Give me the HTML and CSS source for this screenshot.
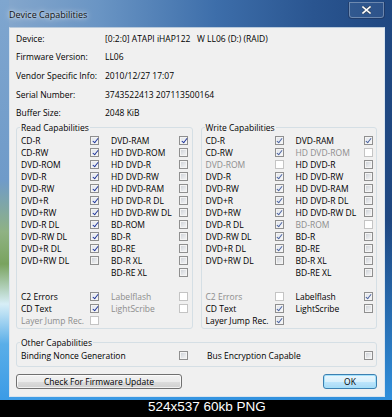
FILE: index.html
```html
<!DOCTYPE html>
<html lang="en">

<head>
  <meta charset="UTF-8">
  <title>Device Capabilities</title>
  <link rel="stylesheet" href="styles.css">
</head>

<body>
  <div class="window">
    <div class="titlebar">
      <span class="title">Device Capabilities</span>
      <span class="close-button">
        <svg width="9" height="8" viewBox="0 0 9 8">
          <path d="M1 1 L8 7 M8 1 L1 7" stroke="#3a4a60" stroke-width="3" stroke-linecap="square" />
          <path d="M1 1 L8 7 M8 1 L1 7" stroke="#ffffff" stroke-width="1.6" stroke-linecap="square" />
        </svg>
      </span>
    </div>

    <div class="client">
      <div class="info">
        <div class="info-row"><span class="info-label">Device:</span><span class="info-value">[0:2:0] ATAPI iHAP122   W LL06 (D:) (RAID)</span></div>
        <div class="info-row"><span class="info-label">Firmware Version:</span><span class="info-value">LL06</span></div>
        <div class="info-row"><span class="info-label">Vendor Specific Info:</span><span class="info-value">2010/12/27 17:07</span></div>
        <div class="info-row"><span class="info-label">Serial Number:</span><span class="info-value">3743522413 207113500164</span></div>
        <div class="info-row"><span class="info-label">Buffer Size:</span><span class="info-value">2048 KiB</span></div>
      </div>

      <div class="caps">
        <fieldset class="group read">
          <legend>Read Capabilities</legend>
          <div class="cap-grid">
            <span>CD-R</span><input type="checkbox" checked><span class="col2">DVD-RAM</span><input type="checkbox" checked>
            <span>CD-RW</span><input type="checkbox" checked><span class="col2">HD DVD-ROM</span><input type="checkbox">
            <span>DVD-ROM</span><input type="checkbox" checked><span class="col2">HD DVD-R</span><input type="checkbox">
            <span>DVD-R</span><input type="checkbox" checked><span class="col2">HD DVD-RW</span><input type="checkbox">
            <span>DVD-RW</span><input type="checkbox" checked><span class="col2">HD DVD-RAM</span><input type="checkbox">
            <span>DVD+R</span><input type="checkbox" checked><span class="col2">HD DVD-R DL</span><input type="checkbox">
            <span>DVD+RW</span><input type="checkbox" checked><span class="col2">HD DVD-RW DL</span><input type="checkbox">
            <span>DVD-R DL</span><input type="checkbox" checked><span class="col2">BD-ROM</span><input type="checkbox">
            <span>DVD-RW DL</span><input type="checkbox" checked><span class="col2">BD-R</span><input type="checkbox">
            <span>DVD+R DL</span><input type="checkbox" checked><span class="col2">BD-RE</span><input type="checkbox">
            <span>DVD+RW DL</span><input type="checkbox"><span class="col2">BD-R XL</span><input type="checkbox">
            <span></span><span></span><span class="col2">BD-RE XL</span><input type="checkbox">
            <div class="spacer"></div>
            <span>C2 Errors</span><input type="checkbox" checked><span class="col2 off">Labelflash</span><input type="checkbox" disabled>
            <span>CD Text</span><input type="checkbox" checked><span class="col2 off">LightScribe</span><input type="checkbox" disabled>
            <span class="off">Layer Jump Rec.</span><input type="checkbox" disabled>
          </div>
        </fieldset>

        <fieldset class="group write">
          <legend>Write Capabilities</legend>
          <div class="cap-grid">
            <span>CD-R</span><input type="checkbox" checked><span class="col2">DVD-RAM</span><input type="checkbox" checked>
            <span>CD-RW</span><input type="checkbox" checked><span class="col2 off">HD DVD-ROM</span><input type="checkbox" disabled>
            <span class="off">DVD-ROM</span><input type="checkbox" disabled><span class="col2">HD DVD-R</span><input type="checkbox">
            <span>DVD-R</span><input type="checkbox" checked><span class="col2">HD DVD-RW</span><input type="checkbox">
            <span>DVD-RW</span><input type="checkbox" checked><span class="col2">HD DVD-RAM</span><input type="checkbox">
            <span>DVD+R</span><input type="checkbox" checked><span class="col2">HD DVD-R DL</span><input type="checkbox">
            <span>DVD+RW</span><input type="checkbox" checked><span class="col2">HD DVD-RW DL</span><input type="checkbox">
            <span>DVD-R DL</span><input type="checkbox" checked><span class="col2 off">BD-ROM</span><input type="checkbox" disabled>
            <span>DVD-RW DL</span><input type="checkbox" checked><span class="col2">BD-R</span><input type="checkbox">
            <span>DVD+R DL</span><input type="checkbox" checked><span class="col2">BD-RE</span><input type="checkbox">
            <span>DVD+RW DL</span><input type="checkbox"><span class="col2">BD-R XL</span><input type="checkbox">
            <span></span><span></span><span class="col2">BD-RE XL</span><input type="checkbox">
            <div class="spacer"></div>
            <span class="off">C2 Errors</span><input type="checkbox" disabled><span class="col2">Labelflash</span><input type="checkbox" checked>
            <span>CD Text</span><input type="checkbox" checked><span class="col2">LightScribe</span><input type="checkbox">
            <span>Layer Jump Rec.</span><input type="checkbox" checked>
          </div>
        </fieldset>
      </div>

      <fieldset class="group other">
        <legend>Other Capabilities</legend>
        <div class="other-grid">
          <span>Binding Nonce Generation</span><input type="checkbox">
          <span class="col2">Bus Encryption Capable</span><input type="checkbox">
        </div>
      </fieldset>

      <div class="buttons">
        <button class="button">Check For Firmware Update</button>
        <button class="button default">OK</button>
      </div>
    </div>
  </div>

  <div class="caption">524x537 60kb PNG</div>
</body>

</html>
```

FILE: styles.css
```css
:root {
  --face: #f0f0f0;
  --text: #000000;
  --text-disabled: #8d8d8d;
  --group-border: #d5dfe5;
  --check: #21369a;
}

* {
  box-sizing: border-box;
}

body {
  margin: 0;
  width: 392px;
  height: 417px;
  background: #000;
  font-family: "Open Sans", "Noto Sans", sans-serif;
  font-size: 8.5px;
  color: var(--text);
  overflow: hidden;
}

/* Aero frame */
.window {
  height: 400px;
  padding: 0 7px 5px 9px;
  display: flex;
  flex-direction: column;
  background:
    linear-gradient(180deg, #7fa6cf 0%, #6f9bc9 45%, #8fb283 58%, #79a35f 66%, #d7eef7 76%, #5aaee8 86%, #3b9be6 100%) left top / 9px 100% no-repeat,
    linear-gradient(180deg, rgba(60, 160, 240, 0) 55%, rgba(50, 155, 235, 0.85) 100%),
    linear-gradient(90deg, #86a8cd 0%, #6a95c4 25%, #3d6eaa 55%, #2a5590 80%, #1f4781 100%);
}

.titlebar {
  height: 27px;
  flex-shrink: 0;
  display: flex;
  justify-content: space-between;
  align-items: flex-start;
}

.title {
  margin-top: 9px;
  line-height: 12px;
  font-size: 9px;
  color: #111;
  text-shadow: 0 0 6px rgba(255, 255, 255, 0.9), 0 0 3px rgba(255, 255, 255, 0.7);
}

.close-button {
  width: 37px;
  height: 17px;
  margin-top: 2px;
  display: flex;
  align-items: center;
  justify-content: center;
  border: 1px solid rgba(20, 40, 80, 0.55);
  border-top: none;
  border-radius: 0 0 4px 4px;
  box-shadow: inset 0 0 0 1px rgba(255, 255, 255, 0.3);
  background: rgba(255, 255, 255, 0.06);
}

.client {
  flex: 1;
  display: flex;
  flex-direction: column;
  padding: 0 7px 7px 6px;
  background: var(--face);
  border: 1px solid #d9e4ee;
  border-top-color: #b9cadb;
}

/* Device info */
.info {
  padding-top: 1px;
}

.info-row {
  height: 18.6px;
  display: flex;
  align-items: center;
}

.info-label {
  width: 89px;
  flex-shrink: 0;
}

.info-value {
  white-space: pre;
}

/* Group boxes */
.group {
  margin: 0;
  min-width: 0;
  padding: 1.5px 4px 2px;
  border: 1px solid var(--group-border);
  border-radius: 3px;
}

.group legend {
  padding: 0 1px;
  margin-left: -1px;
  line-height: 11px;
}

.caps {
  display: flex;
  gap: 8px;
}

.caps .group {
  flex: 1;
}

.cap-grid {
  display: grid;
  grid-template-columns: 69px 9px 80px 9px;
  grid-auto-rows: 12px;
  align-items: center;
  white-space: nowrap;
}

.col2 {
  padding-left: 12px;
}

.spacer {
  grid-column: 1 / -1;
}

.off {
  color: var(--text-disabled);
}

.other {
  margin-top: 7.5px;
  padding-bottom: 5px;
}

.other-grid {
  display: grid;
  grid-template-columns: 158px 9px 176px 9px;
  grid-auto-rows: 12px;
  align-items: center;
  white-space: nowrap;
}

.other-grid .col2 {
  padding-left: 19px;
}

/* Check boxes */
input[type="checkbox"] {
  appearance: none;
  position: relative;
  margin: 0;
  width: 9px;
  height: 9px;
  border: 1px solid #8f8f8f;
  background: linear-gradient(135deg, #c9cdd3 0%, #e4e6e9 55%, #f7f7f7 100%);
  box-shadow: inset 0 0 0 1px #f4f4f4;
}

input[type="checkbox"]:checked {
  background: linear-gradient(135deg, #dfe3ea 0%, #eef0f3 60%, #fafafa 100%);
}

input[type="checkbox"]:checked::after {
  content: '';
  position: absolute;
  left: 2.5px;
  top: 0;
  width: 2px;
  height: 5px;
  border: solid var(--check);
  border-width: 0 1.5px 1.5px 0;
  transform: rotate(38deg);
}

.write input[type="checkbox"]:checked::after {
  border-color: #4a62a0;
}

input[type="checkbox"]:disabled {
  border-color: #c4c4c4;
  background: #ffffff;
  box-shadow: none;
}

/* Buttons */
.buttons {
  margin-top: 6.5px;
  display: flex;
  justify-content: space-between;
}

.button {
  height: 15px;
  padding: 0;
  font: inherit;
  color: var(--text);
  border: 1px solid #707070;
  border-radius: 3px;
  background: linear-gradient(180deg, #f2f2f2 0%, #ebebeb 50%, #dddddd 51%, #cfcfcf 100%);
  box-shadow: inset 0 0 0 1px rgba(255, 255, 255, 0.7);
}

.buttons .button:first-child {
  width: 166px;
}

.button.default {
  width: 54px;
  border-color: #3c7fb1;
  background: linear-gradient(180deg, #eaf6fd 0%, #d9f0fc 50%, #bee6fd 51%, #a7d9f5 100%);
  box-shadow: inset 0 0 0 1px #a3e1fb;
}

/* Forum thumbnail caption */
.caption {
  height: 17px;
  padding-left: 148px;
  line-height: 14px;
  color: #fff;
  font-family: "Liberation Sans", Arial, sans-serif;
  font-size: 13.5px;
}
```
